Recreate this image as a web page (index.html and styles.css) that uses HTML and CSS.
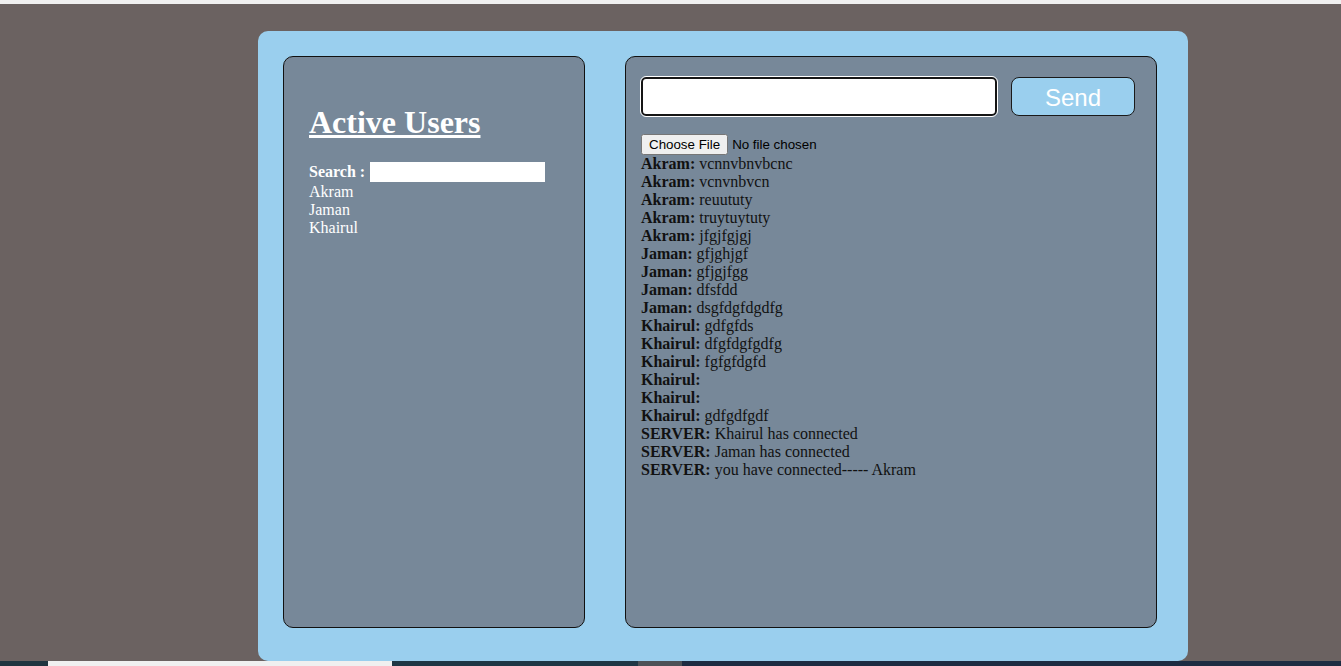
FILE: index.html
```html
<!DOCTYPE html>
<html>
<head>
<meta charset="utf-8">
<title>Chat</title>
<link rel="stylesheet" href="styles.css">
</head>
<body>
<div class="topstrip"></div>
<div class="page">
  <div class="container">
    <div class="panel users">
      <h1 class="title">Active Users</h1>
      <div class="search"><b>Search :</b> <input type="text" class="search-input"></div>
      <div class="user">Akram</div>
      <div class="user">Jaman</div>
      <div class="user">Khairul</div>
    </div>
    <div class="panel chat">
      <div class="compose">
        <input type="text" class="msg-input">
        <button class="send">Send</button>
      </div>
      <div class="file-row"><input type="file" class="file"></div>
      <div class="messages">
        <div><b>Akram:</b> vcnnvbnvbcnc</div>
        <div><b>Akram:</b> vcnvnbvcn</div>
        <div><b>Akram:</b> reuututy</div>
        <div><b>Akram:</b> truytuytuty</div>
        <div><b>Akram:</b> jfgjfgjgj</div>
        <div><b>Jaman:</b> gfjghjgf</div>
        <div><b>Jaman:</b> gfjgjfgg</div>
        <div><b>Jaman:</b> dfsfdd</div>
        <div><b>Jaman:</b> dsgfdgfdgdfg</div>
        <div><b>Khairul:</b> gdfgfds</div>
        <div><b>Khairul:</b> dfgfdgfgdfg</div>
        <div><b>Khairul:</b> fgfgfdgfd</div>
        <div><b>Khairul:</b> </div>
        <div><b>Khairul:</b> </div>
        <div><b>Khairul:</b> gdfgdfgdf</div>
        <div><b>SERVER:</b> Khairul has connected</div>
        <div><b>SERVER:</b> Jaman has connected</div>
        <div><b>SERVER:</b> you have connected----- Akram</div>
      </div>
    </div>
  </div>
</div>
<div class="bottomstrip">
  <div class="seg s1"></div>
  <div class="seg s2"></div>
  <div class="seg s3"></div>
  <div class="seg s4"></div>
  <div class="seg s5"></div>
</div>
</body>
</html>
```

FILE: styles.css
```css
html, body {
  margin: 0;
  padding: 0;
  height: 666px;
  overflow: hidden;
}
body {
  font-family: "Liberation Serif", "Times New Roman", serif;
  font-size: 16px;
  background: #6b6261;
}
.topstrip {
  height: 4px;
  background: #f0f0f0;
}
.page {
  height: 657px;
  padding-top: 27px;
  box-sizing: border-box;
}
.container {
  margin-left: 258px;
  width: 930px;
  height: 630px;
  background: #9acfee;
  border-radius: 10px;
  box-sizing: border-box;
  padding: 25px 31px 0 25px;
  display: flex;
  gap: 40px;
}
.panel {
  background: #778899;
  border: 1px solid #111;
  border-radius: 10px;
  height: 572px;
  box-sizing: border-box;
}
.users {
  width: 302px;
  padding: 0 25px;
  color: #fff;
}
.title {
  font-size: 32px;
  font-weight: bold;
  text-decoration: underline;
  margin: 47px 0 20px;
  line-height: 37px;
}
.search {
  line-height: 20px;
  height: 22px;
  display: flex;
  align-items: center;
  gap: 5px;
  margin-top: 0;
}
.search-input {
  width: 175px;
  height: 20px;
  border: none;
  padding: 0;
  margin: 0;
  background: #fff;
  box-sizing: border-box;
}
.user {
  line-height: 18px;
}
.chat {
  flex: 1;
  padding: 20px 20px 0 15px;
}
.compose {
  display: flex;
  gap: 14px;
  height: 39px;
}
.msg-input {
  width: 356px;
  height: 39px;
  box-sizing: border-box;
  border: 2px solid #151515;
  border-radius: 5px;
  outline: 1px solid #ffffff;
  outline-offset: 0;
  background: #fff;
  margin: 0;
  padding: 0 4px;
}
.send {
  width: 124px;
  height: 39px;
  box-sizing: border-box;
  background: #9acfee;
  border: 1px solid #1a1a1a;
  border-radius: 8px;
  color: #fff;
  font-family: "Liberation Sans", Arial, sans-serif;
  font-size: 24px;
  padding: 2px 0 0;
  margin: 0;
}
.file-row {
  margin-top: 18px;
  height: 21px;
}
.file {
  font-family: "Liberation Sans", Arial, sans-serif;
  font-size: 13.33px;
  color: #000;
  margin: 0;
}
.messages {
  line-height: 18px;
  color: #111;
}
.bottomstrip {
  height: 5px;
  display: flex;
}
.seg { height: 5px; }
.s1 { width: 48px; background: #1f3540; }
.s2 { width: 344px; background: #f0f0f0; }
.s3 { width: 246px; background: #1e3745; }
.s4 { width: 44px; background: #4c5257; }
.s5 { flex: 1; background: #1d2c42; }
```
